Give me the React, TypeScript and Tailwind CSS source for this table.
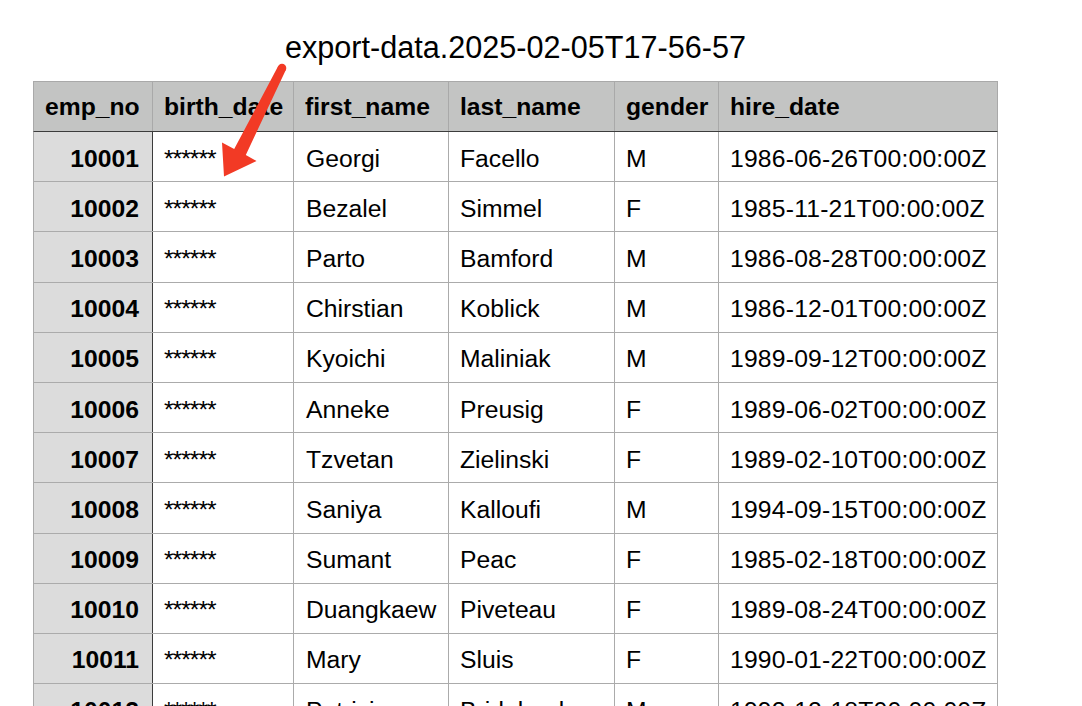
import * as React from "react";

const cols = ["w-[119px]", "w-[141px]", "w-[155px]", "w-[166px]", "w-[104px]", "w-[280px]"];
const heads = ["emp_no", "birth_date", "first_name", "last_name", "gender", "hire_date"];

const rows = [
    ["10001", "Georgi", "Facello", "M", "1986-06-26"],
    ["10002", "Bezalel", "Simmel", "F", "1985-11-21"],
    ["10003", "Parto", "Bamford", "M", "1986-08-28"],
    ["10004", "Chirstian", "Koblick", "M", "1986-12-01"],
    ["10005", "Kyoichi", "Maliniak", "M", "1989-09-12"],
    ["10006", "Anneke", "Preusig", "F", "1989-06-02"],
    ["10007", "Tzvetan", "Zielinski", "F", "1989-02-10"],
    ["10008", "Saniya", "Kalloufi", "M", "1994-09-15"],
    ["10009", "Sumant", "Peac", "F", "1985-02-18"],
    ["10010", "Duangkaew", "Piveteau", "F", "1989-08-24"],
    ["10011", "Mary", "Sluis", "F", "1990-01-22"],
    ["10012", "Patricio", "Bridgland", "M", "1992-12-18"],
];

const Arrow = () => (
    <svg className="absolute left-0 top-0 pointer-events-none" width="1082" height="706">
        <circle cx="282" cy="68" r="4.3" fill="#f23a25" />
        <polygon
            points="278.2,66.1 285.8,69.9 245.8,154.9 256.5,161 224,176.5 222,142.5 234.2,149.1"
            fill="#f23a25"
        />
    </svg>
);

const App = () => {
    return (
        <div className="relative w-[1082px] h-[706px] overflow-hidden bg-white text-black font-['Liberation_Sans',Arial,sans-serif]">
            <div className="w-[965px] ml-[33px]">
                <div className="h-[81px] pt-[29px] text-center text-[30.6px] leading-[36px]">
                    export-data.2025-02-05T17-56-57
                </div>

                <div className="flex h-[51px] bg-[#c3c4c3] border-t border-b border-t-[#a9a9a9] border-b-[#3c3c3c] border-l border-r border-l-[#a9a9a9] border-r-[#a9a9a9] font-bold text-[24.7px]">
                    {heads.map((h, i) => (
                        <div key={h} className={`${cols[i]} shrink-0 flex items-center pl-[11px] ${i < 5 ? "border-r border-[#a9a9a9]" : ""}`}>
                            {h}
                        </div>
                    ))}
                </div>

                {rows.map((r) => (
                    <div key={r[0]} className="flex h-[50.2px] border-b border-[#ababab] border-l border-r text-[24.7px]">
                        <div className="w-[119px] shrink-0 bg-[#dcdcdc] border-r border-[#3c3c3c] flex items-center justify-end pr-[13px] pt-[3px] font-bold">
                            {r[0]}
                        </div>
                        <div className="w-[141px] shrink-0 border-r border-[#ababab] flex items-center pl-[11px] pt-[3px] tracking-[-1px]">
                            ******
                        </div>
                        <div className="w-[155px] shrink-0 border-r border-[#ababab] flex items-center pl-[12px] pt-[3px]">{r[1]}</div>
                        <div className="w-[166px] shrink-0 border-r border-[#ababab] flex items-center pl-[11px] pt-[3px]">{r[2]}</div>
                        <div className="w-[104px] shrink-0 border-r border-[#ababab] flex items-center pl-[11px] pt-[3px]">{r[3]}</div>
                        <div className="flex-1 flex items-center pl-[11px] pt-[3px] tracking-[0.2px]">{r[4]}T00:00:00Z</div>
                    </div>
                ))}
            </div>
            <Arrow />
        </div>
    );
};

export default App;
